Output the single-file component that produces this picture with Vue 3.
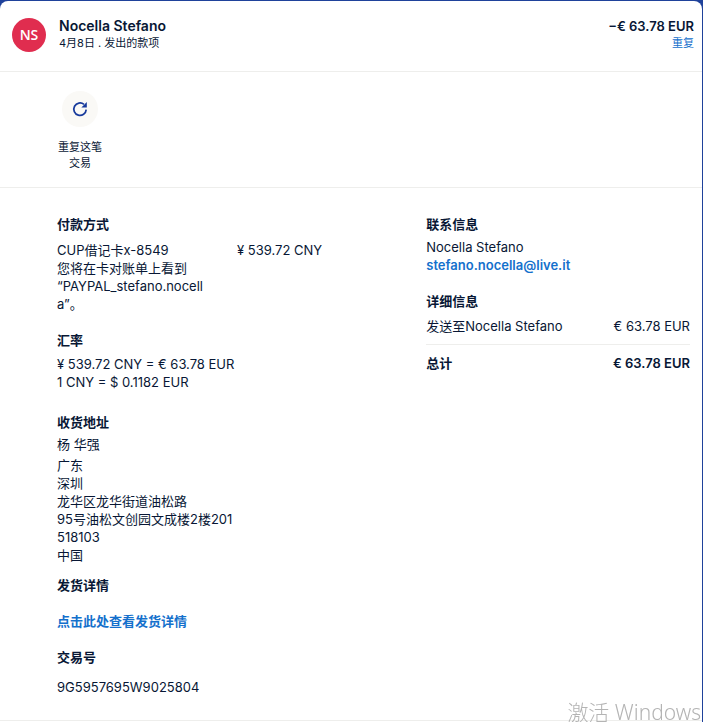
<template>
  <main class="card">
    <header class="header">
      <div class="avatar">NS</div>
      <div class="who">
        <h1>{{ contact.name }}</h1>
        <p>4月8日 . 发出的款项</p>
      </div>
      <div class="total">
        <strong>−€ 63.78 EUR</strong>
        <a href="#">重复</a>
      </div>
    </header>

    <section class="actions">
      <button type="button" class="action">
        <span class="action-icon">
          <svg width="18" height="18" viewBox="0 0 18 18" fill="none" stroke="#173a9c" stroke-width="1.7">
            <path d="M15.2 9.6a6.2 6.2 0 1 1-2.2-5.2" />
            <path d="M15.8 2v5.4h-5.4l2-2z" fill="#173a9c" stroke="none" />
          </svg>
        </span>
        <span class="action-label">重复这笔交易</span>
      </button>
    </section>

    <section class="details">
      <div class="left">
        <h2>付款方式</h2>
        <div class="method">
          <p class="source">CUP借记卡x-8549<br />您将在卡对账单上看到<br />“PAYPAL_stefano.nocella”。</p>
          <span>¥ 539.72 CNY</span>
        </div>

        <h2>汇率</h2>
        <p class="rate">¥ 539.72 CNY = € 63.78 EUR<br />1 CNY = $ 0.1182 EUR</p>

        <h2>收货地址</h2>
        <p class="recipient">杨 华强</p>
        <address>
          <span v-for="line in address" :key="line">{{ line }}</span>
        </address>

        <h2>发货详情</h2>
        <a class="shipping" href="#">点击此处查看发货详情</a>

        <h2>交易号</h2>
        <p class="number">9G5957695W9025804</p>
      </div>

      <div class="right">
        <h2>联系信息</h2>
        <p class="contact">{{ contact.name }}<br /><a :href="'mailto:' + contact.email">{{ contact.email }}</a></p>

        <h2>详细信息</h2>
        <div class="row"><span>发送至{{ contact.name }}</span><span>€ 63.78 EUR</span></div>
        <div class="row sum"><span>总计</span><span>€ 63.78 EUR</span></div>
      </div>
    </section>
  </main>
  <div class="watermark">激活 Windows</div>
</template>

<script setup>
const contact = { name: 'Nocella Stefano', email: 'stefano.nocella@live.it' }
const address = ['广东', '深圳', '龙华区龙华街道油松路', '95号油松文创园文成楼2楼201', '518103', '中国']
</script>

<style>
body { margin:0; background:#1f429b; }
</style>

<style scoped>
.card { margin:1px 1px 0 0; min-height:calc(100vh - 1px); background:#fff; border-radius:8px 8px 0 0; color:#081735; font:13px/18px Inter, "Noto Sans CJK SC", sans-serif; }
h1, h2, p { margin:0; }
a { color:#1470cc; text-decoration:none; font-weight:600; }
.header { display:flex; align-items:center; padding:16px 8px 18px 12px; border-bottom:1px solid #eeeeec; }
.avatar { width:34px; height:34px; border-radius:50%; background:#e02d4f; color:#fff; font:600 14px/34px "Open Sans", sans-serif; text-align:center; }
.who { margin-left:13px; flex:1; }
.who h1 { font-size:14px; line-height:18px; font-weight:600; }
.who p { font-size:11px; line-height:16px; padding-bottom:2px; }
.total { display:flex; flex-direction:column; align-items:flex-end; }
.total strong { font-weight:600; }
.total a { font-size:11px; line-height:16px; padding-bottom:2px; font-weight:400; }
.actions { padding:19px 57px 16px; border-bottom:1px solid #eeeeec; }
.action { display:flex; flex-direction:column; align-items:center; width:46px; padding:0; border:0; background:none; color:inherit; font:inherit; cursor:pointer; }
.action-icon { display:flex; align-items:center; justify-content:center; width:36px; height:36px; border-radius:50%; background:#faf9f6; }
.action-label { width:44px; margin-top:12px; font-size:11px; line-height:16px; }
.details { display:grid; grid-template-columns:7fr 5fr; padding:27px 12px 24px 57px; border-bottom:1px solid #eeeeec; }
h2 { font-size:13px; line-height:18px; font-weight:600; }
.method { display:flex; margin:8px 0 18px; }
.source { width:152px; margin-right:28px; overflow-wrap:anywhere; }
.rate { margin:6px 0 22px; }
.recipient { margin:4px 0 3px; }
address { display:flex; flex-direction:column; margin-bottom:12px; font-style:normal; }
.shipping { display:block; margin:18px 0; }
.number { margin-top:12px; }
.contact { margin:5px 0 18px; }
.row { display:flex; justify-content:space-between; padding:7px 0 9px; border-bottom:1px solid #eeeeec; }
.sum { padding:9px 0 0; border:0; font-weight:600; }
/* sits over the bottom right corner of the window */
.watermark { position:fixed; right:2px; bottom:0; color:#b4b4b4; font:300 21px/20px "Noto Sans", "Noto Sans CJK SC", sans-serif; }
</style>
